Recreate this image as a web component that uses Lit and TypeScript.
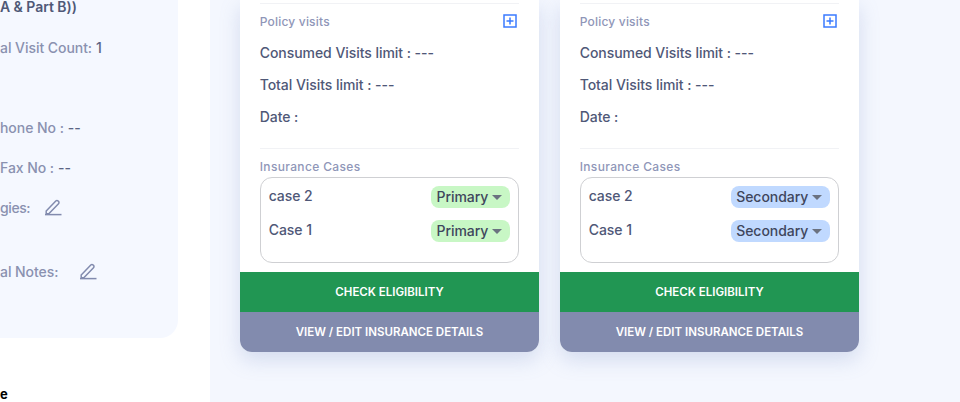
import { LitElement, html, css, svg } from 'lit';
import { customElement, property } from 'lit/decorators.js';

const pencil = html`<svg class="pencil" viewBox="0 0 18 18" width="18" height="18" fill="none" stroke="currentColor" stroke-width="1.5">
  <path d="M2.2 13 L11.8 3 a1.6 1.6 0 0 1 2.3 0 l0.4 0.4 a1.6 1.6 0 0 1 0 2.3 L4.8 15.8 H2.2 Z" />
  <path d="M1 16.6 H17.5" />
</svg>`;

const plus = svg`<rect x="1" y="1" width="12" height="12" fill="none" stroke="#3b7bff" stroke-width="1.5"/>
  <path d="M3.5 7 H10.5 M7 3.5 V10.5" stroke="#3b7bff" stroke-width="1.5"/>`;

@customElement('insurance-card')
export class InsuranceCard extends LitElement {
  @property() priority = 'Primary';

  static styles = css`
    :host {
      display: flex;
      flex-direction: column;
      width: 299.6px;
      height: 352px;
      background: #fff;
      border-radius: 0 0 12px 12px;
      box-shadow: 0 8px 20px rgba(130, 150, 200, 0.28);
      overflow: hidden;
      color: #4f5877;
      font-size: 14px;
      font-weight: 500;
      letter-spacing: -0.05px;
    }
    .body {
      flex: 1;
      padding: 3px 20px 0;
    }
    .visits {
      border-top: 1px solid #f1f2f5;
      border-bottom: 1px solid #f1f2f5;
      height: 146px;
      box-sizing: border-box;
    }
    .head {
      display: flex;
      justify-content: space-between;
      align-items: center;
      height: 33px;
      padding-top: 1px;
      box-sizing: border-box;
      color: #8f96b8;
      font-size: 12px;
      font-weight: 500;
      letter-spacing: 0.2px;
    }
    .head svg {
      margin-right: 2px;
    }
    .line {
      height: 32px;
      line-height: 32px;
    }
    .cases-label {
      color: #8f96b8;
      font-size: 12px;
      font-weight: 500;
      letter-spacing: 0.35px;
      line-height: 19px;
      margin-top: 8px;
      margin-bottom: 1px;
    }
    .cases {
      border: 1px solid #cfd0d3;
      border-radius: 12px;
      height: 86px;
      box-sizing: border-box;
      padding: 8px;
      display: flex;
      flex-direction: column;
      gap: 12px;
    }
    .case {
      display: flex;
      justify-content: space-between;
      height: 22px;
      line-height: 19px;
    }
    .pill {
      display: flex;
      align-items: center;
      gap: 4px;
      height: 22px;
      padding: 0 8px 0 5px;
      border-radius: 8px;
      color: #3f465c;
      line-height: 22px;
    }
    .pill.primary {
      background: #c8f7c5;
    }
    .pill.secondary {
      background: #c0d9ff;
    }
    .caret {
      width: 0;
      height: 0;
      border-left: 5px solid transparent;
      border-right: 5px solid transparent;
      border-top: 5px solid #6b7280;
    }
    .btn {
      height: 40px;
      line-height: 40px;
      text-align: center;
      color: #fff;
      font-size: 11.5px;
      font-weight: 600;
      letter-spacing: 0;
    }
    .btn.check {
      background: #219653;
    }
    .btn.view {
      background: #828bae;
    }
  `;

  render() {
    const cls = this.priority.toLowerCase();
    const pill = html`<span class="pill ${cls}">${this.priority}<span class="caret"></span></span>`;
    return html`
      <div class="body">
        <div class="visits">
          <div class="head">Policy visits <svg viewBox="0 0 14 14" width="14" height="14">${plus}</svg></div>
          <div class="line">Consumed Visits limit : ---</div>
          <div class="line">Total Visits limit : ---</div>
          <div class="line">Date :</div>
        </div>
        <div class="cases-label">Insurance Cases</div>
        <div class="cases">
          <div class="case">case 2 ${pill}</div>
          <div class="case">Case 1 ${pill}</div>
        </div>
      </div>
      <div class="btn check">CHECK ELIGIBILITY</div>
      <div class="btn view">VIEW / EDIT INSURANCE DETAILS</div>
    `;
  }
}

@customElement('app-root')
export class AppRoot extends LitElement {
  static styles = css`
    :host {
      display: flex;
      width: 960px;
      height: 402px;
      overflow: hidden;
      background: #fff;
      font-family: 'Inter', 'Open Sans', sans-serif;
    }
    .side {
      width: 210px;
      flex: none;
    }
    .panel {
      width: 178px;
      height: 338px;
      box-sizing: border-box;
      background: #f5f8ff;
      border-radius: 0 0 18px 0;
      color: #8a91b0;
      font-size: 14px;
      font-weight: 500;
      letter-spacing: -0.05px;
    }
    .title {
      color: #4f5877;
      font-weight: 600;
      line-height: 14px;
      white-space: nowrap;
    }
    .row {
      display: flex;
      align-items: center;
      gap: 18px;
      height: 40px;
      white-space: nowrap;
    }
    .row b {
      font-weight: 500;
      color: #5b6484;
      margin-left: 4px;
    }
    .count {
      margin-top: 13px;
    }
    .phone {
      margin-top: 40px;
    }
    .gies {
      gap: 14px;
      letter-spacing: -0.4px;
    }
    .notes {
      margin-top: 24px;
      gap: 21px;
    }
    .pencil {
      color: #828bae;
    }
    .tail {
      margin-top: 48px;
      font-size: 13px;
      font-weight: 700;
      line-height: 16px;
      color: #000;
    }
    .main {
      flex: 1;
      background: #f4f7fe;
      display: flex;
      gap: 20.4px;
      padding-left: 29.7px;
    }
  `;

  render() {
    return html`
      <div class="side">
        <div class="panel">
          <div class="title">A &amp; Part B))</div>
          <div class="row count"><span>al Visit Count:<b>1</b></span></div>
          <div class="row phone"><span>hone No :<b>--</b></span></div>
          <div class="row"><span>Fax No :<b>--</b></span></div>
          <div class="row gies">gies: ${pencil}</div>
          <div class="row notes">al Notes: ${pencil}</div>
        </div>
        <div class="tail">e</div>
      </div>
      <div class="main">
        <insurance-card priority="Primary"></insurance-card>
        <insurance-card priority="Secondary"></insurance-card>
      </div>
    `;
  }
}
